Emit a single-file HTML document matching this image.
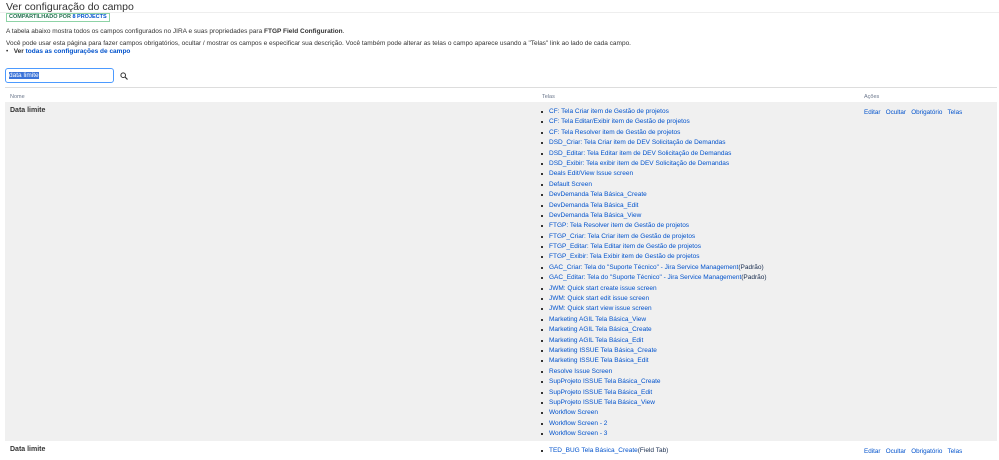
<!DOCTYPE html>
<html><head><meta charset="utf-8"><style>
*{margin:0;padding:0;box-sizing:border-box}
body{width:999px;height:460px;overflow:hidden;background:#fff;font-family:"Liberation Sans",sans-serif;color:#172b4d;position:relative}
a,.l{color:#0052cc;text-decoration:none}
.a{position:absolute;white-space:nowrap}
.s{font-size:6.5px}
.li{position:relative;padding-left:9px}
.li:before{content:"";position:absolute;left:1px;top:4px;width:2px;height:2px;background:#333}
</style></head><body>
<div class="a" style="left:6px;top:1px;font-size:10.5px;color:#333">Ver configuração do campo</div>
<div class="a" style="left:0;right:0;top:12px;border-top:1px solid #eee"></div>
<div class="a" style="left:6px;top:13px;font-size:5.5px;font-weight:bold;color:#216e4e;border:1px solid #8dd3a6;padding:0 2px;line-height:7px">COMPARTILHADO POR <span style="color:#0052cc">8 PROJECTS</span></div>
<div class="a s" style="left:6px;top:28px;color:#333">A tabela abaixo mostra todos os campos configurados no JIRA e suas propriedades para <b>FTGP Field Configuration</b>.</div>
<div class="a s" style="left:6px;top:40px;color:#333">Você pode usar esta página para fazer campos obrigatórios, ocultar / mostrar os campos e especificar sua descrição. Você também pode alterar as telas o campo aparece usando a "Telas" link ao lado de cada campo.</div>
<div class="a s" style="left:6px;top:48px;color:#333">•&nbsp;&nbsp; <b>Ver <span class="l">todas as configurações de campo</span></b></div>
<div class="a" style="left:5px;top:68px;width:109px;height:15px;border:1.5px solid #4c9aff;border-radius:3px;background:#fff"><span style="position:absolute;left:3px;top:3px;font-size:6.5px;background:#3b73d8;color:#fff">data limite</span></div>
<svg class="a" style="left:120px;top:72px" width="8" height="8" viewBox="0 0 8 8"><circle cx="3.2" cy="3.2" r="2.3" fill="none" stroke="#333" stroke-width="1"/><path d="M5 5L7.5 7.5" stroke="#333" stroke-width="1.2"/></svg>
<div class="a" style="left:5px;right:2px;top:87px;border-top:1px solid #ddd"></div>
<div class="a" style="left:10px;top:94px;font-size:5.5px;color:#6b778c">Nome</div>
<div class="a" style="left:542px;top:94px;font-size:5.5px;color:#6b778c">Telas</div>
<div class="a" style="left:864px;top:94px;font-size:5.5px;color:#6b778c">Ações</div>
<div class="a" style="left:5px;right:2px;top:102px;height:339px;background:#f0f0f0"></div>
<div class="a" style="left:10px;top:107px;font-size:7px;font-weight:bold;color:#333">Data limite</div>
<div class="a l" style="left:864px;top:109px;font-size:6.3px">Editar&nbsp;&nbsp; Ocultar&nbsp;&nbsp; Obrigatório&nbsp;&nbsp; Telas</div>
<div class="a s" style="left:540px;top:107px;line-height:10.39px">
<div class="li"><span class="l">CF: Tela Criar item de Gestão de projetos</span></div>
<div class="li"><span class="l">CF: Tela Editar/Exibir item de Gestão de projetos</span></div>
<div class="li"><span class="l">CF: Tela Resolver item de Gestão de projetos</span></div>
<div class="li"><span class="l">DSD_Criar: Tela Criar item de DEV Solicitação de Demandas</span></div>
<div class="li"><span class="l">DSD_Editar: Tela Editar item de DEV Solicitação de Demandas</span></div>
<div class="li"><span class="l">DSD_Exibir: Tela exibir item de DEV Solicitação de Demandas</span></div>
<div class="li"><span class="l">Deals Edit/View Issue screen</span></div>
<div class="li"><span class="l">Default Screen</span></div>
<div class="li"><span class="l">DevDemanda Tela Básica_Create</span></div>
<div class="li"><span class="l">DevDemanda Tela Básica_Edit</span></div>
<div class="li"><span class="l">DevDemanda Tela Básica_View</span></div>
<div class="li"><span class="l">FTGP: Tela Resolver item de Gestão de projetos</span></div>
<div class="li"><span class="l">FTGP_Criar: Tela Criar item de Gestão de projetos</span></div>
<div class="li"><span class="l">FTGP_Editar: Tela Editar item de Gestão de projetos</span></div>
<div class="li"><span class="l">FTGP_Exibir: Tela Exibir item de Gestão de projetos</span></div>
<div class="li"><span class="l">GAC_Criar: Tela do "Suporte Técnico" - Jira Service Management</span>(Padrão)</div>
<div class="li"><span class="l">GAC_Editar: Tela do "Suporte Técnico" - Jira Service Management</span>(Padrão)</div>
<div class="li"><span class="l">JWM: Quick start create issue screen</span></div>
<div class="li"><span class="l">JWM: Quick start edit issue screen</span></div>
<div class="li"><span class="l">JWM: Quick start view issue screen</span></div>
<div class="li"><span class="l">Marketing AGIL Tela Básica_View</span></div>
<div class="li"><span class="l">Marketing AGIL Tela Básica_Create</span></div>
<div class="li"><span class="l">Marketing AGIL Tela Básica_Edit</span></div>
<div class="li"><span class="l">Marketing ISSUE Tela Básica_Create</span></div>
<div class="li"><span class="l">Marketing ISSUE Tela Básica_Edit</span></div>
<div class="li"><span class="l">Resolve Issue Screen</span></div>
<div class="li"><span class="l">SupProjeto ISSUE Tela Básica_Create</span></div>
<div class="li"><span class="l">SupProjeto ISSUE Tela Básica_Edit</span></div>
<div class="li"><span class="l">SupProjeto ISSUE Tela Básica_View</span></div>
<div class="li"><span class="l">Workflow Screen</span></div>
<div class="li"><span class="l">Workflow Screen - 2</span></div>
<div class="li"><span class="l">Workflow Screen - 3</span></div>
</div>
<div class="a" style="left:10px;top:446px;font-size:7px;font-weight:bold;color:#333">Data limite</div>
<div class="a s" style="left:540px;top:446px;line-height:10px"><div class="li"><span class="l">TED_BUG Tela Básica_Create</span>(Field Tab)</div></div>
<div class="a l" style="left:864px;top:448px;font-size:6.3px">Editar&nbsp;&nbsp; Ocultar&nbsp;&nbsp; Obrigatório&nbsp;&nbsp; Telas</div>
</body></html>
